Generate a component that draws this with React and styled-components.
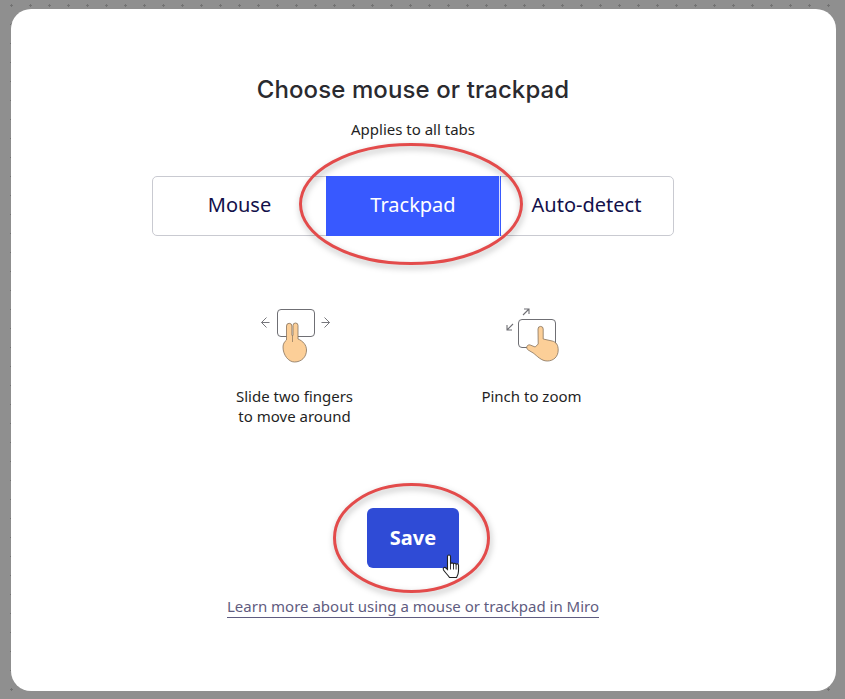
import styled, { createGlobalStyle } from "styled-components"

const GlobalStyle = createGlobalStyle`
    html, body {
        margin: 0;
        height: 100%;
    }
    body {
        background-color: #8f8f8f;
        background-image: radial-gradient(circle at 1.5px 1.5px, #727272 1px, transparent 1.4px);
        background-size: 19px 19px;
        background-position: 10px 4px;
        font-family: "Noto Sans", sans-serif;
        overflow: hidden;
    }
`

const Page = styled.div`
    width: 845px;
    height: 699px;
    box-sizing: border-box;
    padding: 9px 9px 8px 11px;
`

const Card = styled.div`
    height: 682px;
    box-sizing: border-box;
    padding: 66px 21px 0 0;
    background: #fff;
    border-radius: 20px;
    display: flex;
    flex-direction: column;
    align-items: center;
`

const Title = styled.h1`
    margin: 0;
    font-family: "Inter", sans-serif;
    font-size: 24px;
    line-height: 30px;
    font-weight: 500;
    letter-spacing: 0.1px;
    color: #2a2a2f;
`

const Subtitle = styled.p`
    margin: 14px 0 0;
    font-size: 15px;
    line-height: 20px;
    color: #1f1f24;
`

const SegmentWrap = styled.div`
    position: relative;
    margin-top: 37px;
`

const Segments = styled.div`
    display: grid;
    grid-template-columns: 173px 174px 173px;
    height: 60px;
    box-sizing: border-box;
    border: 1px solid #c9cad1;
    border-radius: 5px;
`

const Segment = styled.div`
    display: flex;
    align-items: center;
    justify-content: center;
    margin: -1px 0;
    padding-bottom: 3px;
    font-size: 20px;
    color: ${({ $active }) => ($active ? "#fff" : "#12104a")};
    background: ${({ $active }) => ($active ? "#3859ff" : "transparent")};
    box-shadow: ${({ $active }) => ($active ? "inset -1px 0 0 #d5dbff, 1px 0 0 #3859ff" : "none")};
`

const Ring = styled.svg`
    position: absolute;
    left: ${({ $left }) => $left}px;
    top: ${({ $top }) => $top}px;
    overflow: visible;
    pointer-events: none;
    filter: drop-shadow(1px 3px 3px rgba(0, 0, 0, 0.3));
`

const Hints = styled.div`
    display: grid;
    grid-template-columns: 190px 190px;
    column-gap: 47px;
    margin-top: 72px;
`

const Hint = styled.div`
    display: flex;
    flex-direction: column;
    align-items: center;
`

const HintText = styled.p`
    margin: 22px 0 0;
    font-size: 15px;
    line-height: 20px;
    text-align: center;
    color: #1f1f24;
`

const HintIcon = styled.svg`
    display: block;
    overflow: visible;
`

const SaveWrap = styled.div`
    position: relative;
    margin-top: 82px;
`

const SaveButton = styled.button`
    display: block;
    width: 92px;
    height: 60px;
    padding: 0 0 2px;
    border: none;
    border-radius: 6px;
    background: #2f4bd6;
    color: #fff;
    font-family: "Noto Sans", sans-serif;
    font-size: 20px;
    font-weight: 700;
`

const Cursor = styled.svg`
    position: absolute;
    left: 75px;
    top: 46px;
`

const LearnLink = styled.a`
    margin-top: 29px;
    padding-bottom: 2px;
    font-size: 15px;
    line-height: 18px;
    color: #5f5c80;
    border-bottom: 1px solid #5f5c80;
`

const SlideIcon = () => (
    <HintIcon width="72" height="56" viewBox="0 0 72 56" fill="none">
        <rect x="18.500" y="1.500" width="37" height="27" rx="3.500" fill="#fff" stroke="#6f6f74" strokeWidth="1" />
        <path d="M7.500 9.500l-5 5 5 5M2.500 14.500h8M65.500 9.500l5 5-5 5M70.500 14.500h-8" stroke="#77777c" strokeWidth="1" />
        <path
            d="M27.500 32V18a2.700 2.700 0 0 1 5.400 0v9l.6 1 .5-1v-9.500a2.500 2.500 0 0 1 5 0V31c5 2 8.500 6 8.500 11 0 7-5 12-12 12-6 0-11.500-7-11.500-15 0-3 1.500-5.500 3.500-7z"
            fill="#fccf98"
            stroke="#85715c"
            strokeWidth="0.8"
        />
        <path d="M33.500 28v6" stroke="#85715c" strokeWidth="0.7" />
    </HintIcon>
)

const PinchIcon = () => (
    <HintIcon width="60" height="56" viewBox="0 0 60 56" fill="none">
        <rect x="16.500" y="11.500" width="37" height="28" rx="3.500" fill="#fff" stroke="#6f6f74" strokeWidth="1" />
        <path d="M21 7l6-6M22 1h5v5M11 16l-6 6M5 17v5h5" stroke="#6f6f74" strokeWidth="1.100" />
        <path
            d="M36 21a2.600 2.600 0 0 1 5.200 0v10l9 2c4 1 6 4 6 9 0 7-5 11-11 11-6 0-10-5-14-8l-5-3c-3-2-1-6 2-5l5 2 3-3z"
            fill="#fccf98"
            stroke="#85715c"
            strokeWidth="0.8"
        />
    </HintIcon>
)

const App = () => {
    return (
        <>
            <GlobalStyle />
            <Page>
                <Card>
                    <Title>Choose mouse or trackpad</Title>
                    <Subtitle>Applies to all tabs</Subtitle>
                    <SegmentWrap>
                        <Segments>
                            <Segment>Mouse</Segment>
                            <Segment $active>Trackpad</Segment>
                            <Segment>Auto-detect</Segment>
                        </Segments>
                        <Ring $left={147} $top={-33} width="224" height="122" viewBox="0 0 224 122" fill="none">
                            <ellipse cx="112" cy="61" rx="110.500" ry="59.500" stroke="#e34b4b" strokeWidth="3" />
                        </Ring>
                    </SegmentWrap>
                    <Hints>
                        <Hint>
                            <SlideIcon />
                            <HintText>
                                Slide two fingers
                                <br />
                                to move around
                            </HintText>
                        </Hint>
                        <Hint>
                            <PinchIcon />
                            <HintText>Pinch to zoom</HintText>
                        </Hint>
                    </Hints>
                    <SaveWrap>
                        <SaveButton>Save</SaveButton>
                        <Ring $left={-34} $top={-25} width="157" height="110" viewBox="0 0 157 110" fill="none">
                            <ellipse cx="78.500" cy="55" rx="77" ry="53.500" stroke="#e34b4b" strokeWidth="3" />
                        </Ring>
                        <Cursor width="18" height="25" viewBox="0 0 18 25">
                            <path
                                d="M5.500 2.500c0-2 3-2 3 0V10c.5-1.500 2.500-1.500 3 0 .5-1 2.200-1 2.600.3.600-.8 2.400-.6 2.400 1v5.700c0 3-1 4.500-2 6.500H7.500C6 21 3 18.500 1.500 16c-1-2 1-3.500 2.500-2l1.500 1.500z"
                                fill="#fff"
                                stroke="#222"
                                strokeWidth="1.100"
                            />
                            <path d="M8.500 10v5.500M11.500 10v5.500M14.100 10.500v5" stroke="#222" strokeWidth="0.900" />
                        </Cursor>
                    </SaveWrap>
                    <LearnLink>Learn more about using a mouse or trackpad in Miro</LearnLink>
                </Card>
            </Page>
        </>
    )
}

export default App
